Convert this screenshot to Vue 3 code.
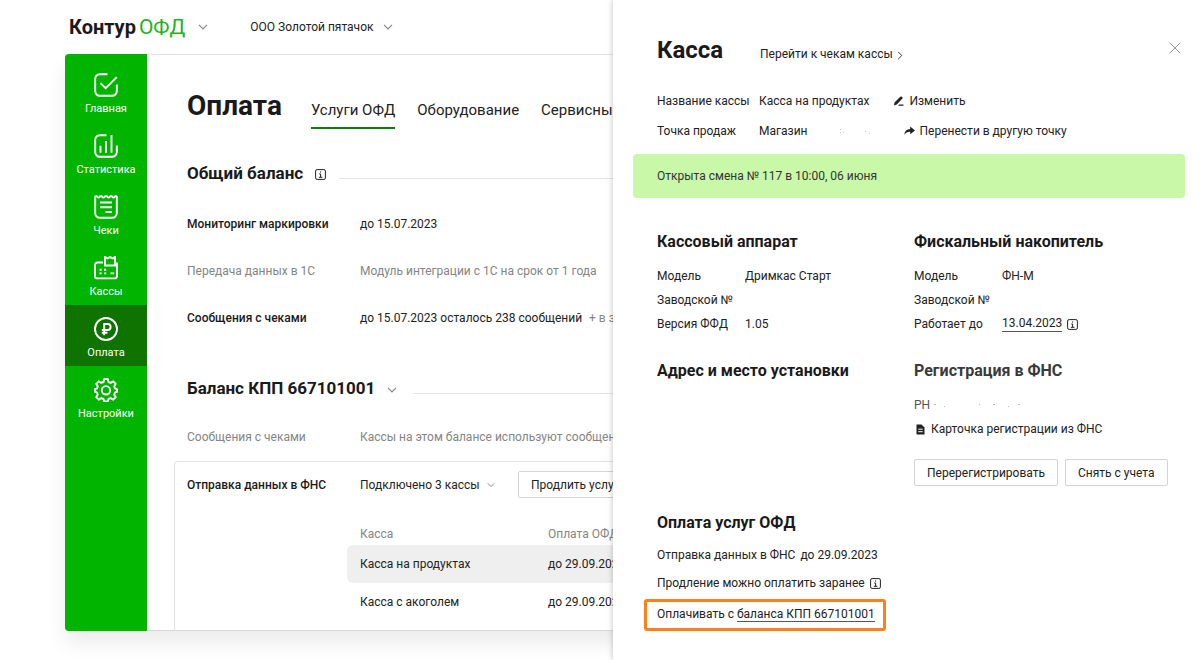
<script setup>
const menu = [
  { id: 'home', label: 'Главная' },
  { id: 'stats', label: 'Статистика' },
  { id: 'checks', label: 'Чеки' },
  { id: 'tills', label: 'Кассы' },
  { id: 'pay', label: 'Оплата', active: true },
  { id: 'settings', label: 'Настройки' },
]

const tabs = ['Услуги ОФД', 'Оборудование', 'Сервисные']

const tills = [
  { name: 'Касса на продуктах', paid: 'до 29.09.2023', selected: true },
  { name: 'Касса с акоголем', paid: 'до 29.09.2023' },
]
</script>

<template>
  <div class="page">
    <header class="top">
      <button class="logo" type="button">
        <span class="brand">Контур</span><span class="product">ОФД</span>
        <svg class="chev" viewBox="0 0 10 6"><path d="M1 .8 5 5 9 .8" /></svg>
      </button>
      <button class="org" type="button">
        ООО Золотой пятачок
        <svg class="chev" viewBox="0 0 10 6"><path d="M1 .8 5 5 9 .8" /></svg>
      </button>
    </header>

    <div class="window">
      <nav class="side">
        <a v-for="m in menu" :key="m.id" href="#" :class="['item', { active: m.active }]">
          <svg v-if="m.id === 'home'" viewBox="0 0 24 24">
            <path d="M13.5 1.2H6A4.6 4.6 0 0 0 1.2 6v12A4.6 4.6 0 0 0 6 22.8h12a4.6 4.6 0 0 0 4.8-4.8v-6.5" />
            <path d="m6.5 10.2 5.2 5L22.8 4.2" />
          </svg>
          <svg v-else-if="m.id === 'stats'" viewBox="0 0 24 24">
            <path d="M12.5 1.2H6A4.6 4.6 0 0 0 1.2 6v12A4.6 4.6 0 0 0 6 22.8h12a4.6 4.6 0 0 0 4.8-4.8v-6.5" />
            <path d="M6.5 18.8v-7M12 18.8V7M17.5 18.8V1" />
          </svg>
          <svg v-else-if="m.id === 'checks'" viewBox="0 0 24 24">
            <path d="M1.2 1v17A4.6 4.6 0 0 0 6 22.8h12a4.6 4.6 0 0 0 4.8-4.8V1" />
            <path d="M1.2 1.3h1.6q1.6 2.6 3.4 0h1.5q1.7 2.6 3.5 0h1.6q1.8 2.6 3.5 0h1.5q1.8 2.6 3.4 0h1.6" />
            <path d="M6 7.5h12M6 12.2h12M11.5 17H18" />
          </svg>
          <svg v-else-if="m.id === 'tills'" viewBox="0 0 24 24">
            <path d="M9 6.500H3.500A2.500 2.500 0 0 0 1 9v11.200A2.200 2.200 0 0 0 3.200 22.400h17.600a2.200 2.200 0 0 0 2.200-2.200V6.500" />
            <path d="M11 9.500V1l2.400 1.400L16 1l2.600 1.400L21 1v8.500z" />
            <path d="M5.500 13.700h2.200M10 13.700h2.200M5.500 17.400h2.200M10 17.400h2.200M16.500 17.400h3.700" />
          </svg>
          <svg v-else-if="m.id === 'pay'" viewBox="0 0 24 24">
            <circle cx="12" cy="12" r="11" />
            <path d="M10.200 18.200V7h3.400a3 3 0 0 1 0 6H7.800M7.800 15.700h5.700" />
          </svg>
          <svg v-else viewBox="0 0 24 24">
            <path
              stroke-linejoin="round"
              d="M10.200 1h3.600l.7 3 2.200.9 2.600-1.600 2.500 2.500-1.600 2.600.9 2.200 2 .5v2.800l-2 .5-.9 2.200 1.600 2.600-2.500 2.500-2.600-1.600-2.200.9-.7 2.500h-3.600l-.7-2.500-2.200-.9-2.600 1.600-2.500-2.500 1.600-2.600-.9-2.200-2-.5v-2.800l2-.5.9-2.200-1.600-2.600 2.500-2.500 2.600 1.600 2.200-.9z"
            />
            <circle cx="12" cy="12.300" r="4.200" />
          </svg>
          <span>{{ m.label }}</span>
        </a>
      </nav>

      <main class="content">
        <div class="title-row">
          <h1>Оплата</h1>
          <nav class="tabs">
            <a v-for="(t, i) in tabs" :key="t" href="#" :class="{ current: i === 0 }">{{ t }}</a>
          </nav>
        </div>

        <section class="balance">
          <div class="section-title">
            <h2>Общий баланс</h2>
            <svg class="info" viewBox="0 0 11 11"><rect x=".6" y=".6" width="9.800" height="9.800" rx="1.500" /><path d="M5.600 2.400v1.200M4.200 5h1.400v3.200M3.800 8.300h3.600" /></svg>
            <span class="line"></span>
          </div>
          <dl class="services">
            <dt>Мониторинг маркировки</dt>
            <dd>до 15.07.2023</dd>
            <dt class="off">Передача данных в 1С</dt>
            <dd class="off">Модуль интеграции с 1С на срок от 1 года</dd>
            <dt>Сообщения с чеками</dt>
            <dd>до 15.07.2023 осталось 238 сообщений <span class="reserve">+ в запасе</span></dd>
          </dl>
        </section>

        <section class="kpp">
          <div class="section-title">
            <h2>Баланс КПП 667101001</h2>
            <svg class="chev" viewBox="0 0 10 6"><path d="M1 .8 5 5 9 .8" /></svg>
            <span class="line"></span>
          </div>
          <dl class="services">
            <dt class="off">Сообщения с чеками</dt>
            <dd class="off">Кассы на этом балансе используют сообщения</dd>
          </dl>
          <div class="card">
            <div class="card-head">
              <h3>Отправка данных в ФНС</h3>
              <button class="drop" type="button">
                Подключено 3 кассы
                <svg class="chev small" viewBox="0 0 10 6"><path d="M1 .8 5 5 9 .8" /></svg>
              </button>
              <button class="btn" type="button">Продлить услуги</button>
            </div>
            <table>
              <thead>
                <tr><th>Касса</th><th>Оплата ОФД</th></tr>
              </thead>
              <tbody>
                <tr v-for="t in tills" :key="t.name" :class="{ selected: t.selected }">
                  <td>{{ t.name }}</td>
                  <td>{{ t.paid }}</td>
                </tr>
              </tbody>
            </table>
          </div>
        </section>
      </main>
    </div>

    <aside class="panel">
      <div class="panel-head">
        <h2>Касса</h2>
        <a href="#">Перейти к чекам кассы <svg class="next" viewBox="0 0 6 10"><path d="m1 1 4 4-4 4" /></svg></a>
        <button class="close" type="button" aria-label="Закрыть">
          <svg viewBox="0 0 12 12"><path d="m.8.800 10.400 10.400M11.200.800.800 11.200" /></svg>
        </button>
      </div>

      <dl class="about">
        <dt>Название кассы</dt>
        <dd>
          Касса на продуктах
          <button class="act edit" type="button">
            <svg viewBox="0 0 11 10"><path d="M1 9.500 1.500 6.600 7.300.8Q8 .1 8.900.800l.5.500q.6.700 0 1.300L3.800 8.600z" /><path d="M6 8.500h4.500v1.300H5z" /></svg>
            Изменить
          </button>
        </dd>
        <dt>Точка продаж</dt>
        <dd>
          Магазин
          <svg class="specks" viewBox="0 0 32 8"><path d="M1 2h1v1H1zM1 5h1v1H1zM4 5h1v1H4zM26 4h1v1h-1zM30 6h1v1h-1z" /></svg>
          <button class="act move" type="button">
            <svg viewBox="0 0 11 10"><path d="M.3 9Q.8 3.200 6.200 3.100V.6L11 4.400 6.200 8.200V5.800Q2.400 5.500.3 9z" /></svg>
            Перенести в другую точку
          </button>
        </dd>
      </dl>

      <p class="shift">Открыта смена № 117 в 10:00, 06 июня</p>

      <div class="cols">
        <section>
          <h3>Кассовый аппарат</h3>
          <dl>
            <dt>Модель</dt><dd>Дримкас Старт</dd>
            <dt>Заводской №</dt><dd></dd>
            <dt>Версия ФФД</dt><dd>1.05</dd>
          </dl>
        </section>
        <section>
          <h3>Фискальный накопитель</h3>
          <dl>
            <dt>Модель</dt><dd>ФН-М</dd>
            <dt>Заводской №</dt><dd></dd>
            <dt>Работает до</dt>
            <dd class="with-icon">
              <a class="under" href="#">13.04.2023</a>
              <svg class="info" viewBox="0 0 11 11"><rect x=".6" y=".6" width="9.800" height="9.800" rx="1.500" /><path d="M5.600 2.400v1.200M4.200 5h1.400v3.200M3.800 8.300h3.600" /></svg>
            </dd>
          </dl>
        </section>
        <section>
          <h3>Адрес и место установки</h3>
        </section>
        <section>
          <h3 class="soft">Регистрация в ФНС</h3>
          <p class="rn">РН <svg class="rn-specks" viewBox="0 0 96 8"><path d="M1 3h2v1H1zM11 5h1v1h-1zM46 3h1v1h-1zM60 3h2v1h-2zM75 5h1v1h-1zM85 3h2v1h-2z" /></svg></p>
          <a class="doc" href="#">
            <svg viewBox="0 0 9 11"><path d="M.5.500h5L8.500 3.500v7h-8z" /><path class="cut" d="M2.300 5.200h4.400M2.300 7.700h4.400" /></svg>
            Карточка регистрации из ФНС
          </a>
          <div class="buttons">
            <button class="btn" type="button">Перерегистрировать</button>
            <button class="btn" type="button">Снять с учета</button>
          </div>
        </section>
      </div>

      <section class="payment">
        <h3>Оплата услуг ОФД</h3>
        <p>Отправка данных в ФНС <span>до 29.09.2023</span></p>
        <p class="with-icon">
          Продление можно оплатить заранее
          <svg class="info" viewBox="0 0 11 11"><rect x=".6" y=".6" width="9.800" height="9.800" rx="1.500" /><path d="M5.600 2.400v1.200M4.200 5h1.400v3.200M3.800 8.300h3.600" /></svg>
        </p>
        <p class="marked">Оплачивать с <a class="under" href="#">баланса КПП 667101001</a></p>
      </section>
    </aside>
  </div>
</template>

<style>
body { margin: 0; background: #fff; }
</style>

<style scoped>
.page {
  position: relative;
  min-height: 100vh;
  overflow: hidden;
  font: 12px/24px Roboto, "Noto Sans", sans-serif;
  color: #222;
}
h1, h2, h3, p, dl, dd, dt { margin: 0; font-weight: 400; }
a { color: inherit; text-decoration: none; }
button { font: inherit; color: inherit; background: none; border: 0; padding: 0; }
svg { fill: none; stroke: currentColor; flex: none; }

.top { display: flex; align-items: center; height: 54px; padding-left: 69px; }
.logo { display: flex; align-items: baseline; line-height: 28px; }
.brand { font-size: 20px; font-weight: 700; color: #1a1a1a; }
.product { font-size: 21px; font-weight: 400; color: #1db51d; margin-left: 3px; }
.chev { width: 10px; height: 6px; color: #888; stroke-width: 1.2; }
.chev.small { width: 8px; }
.logo .chev { margin-left: 13px; align-self: center; }
.org { display: flex; align-items: center; gap: 10px; margin-left: 42px; }

.window {
  display: flex;
  margin-left: 65px;
  border-top: 1px solid #e4e4e4;
  border-bottom: 1px solid #d8d8d8;
  border-radius: 4px 0 0 4px;
  box-shadow: 0 12px 20px rgba(0, 0, 0, 0.08);
}
.side {
  flex: none;
  width: 82px;
  margin: -1px 0;
  padding-top: 7px;
  box-sizing: border-box;
  background: #00b400;
  border-radius: 4px 0 0 4px;
  color: #fff;
}
.item {
  display: flex;
  flex-direction: column;
  align-items: center;
  height: 61px;
  box-sizing: border-box;
  padding-top: 12px;
  font-size: 11px;
  line-height: 14px;
}
.item.active { background: #0f7300; }
.item svg { width: 24px; height: 24px; stroke-width: 1.9; margin-bottom: 5px; }

.content { flex: 1; min-width: 0; padding: 33px 0 0 27px; overflow: hidden; }
.title-row { display: flex; align-items: baseline; padding-left: 13px; gap: 29px; white-space: nowrap; }
h1 { font-size: 28px; line-height: 36px; font-weight: 700; color: #1a1a1a; }
.tabs { display: flex; gap: 22px; font-size: 15px; line-height: 24px; }
.tabs a { padding-bottom: 5px; }
.tabs .current { border-bottom: 2px solid #0f7d0f; }

.section-title { display: flex; align-items: center; padding-left: 13px; }
.section-title h2 { font-size: 17px; font-weight: 700; color: #1a1a1a; }
.section-title .line { flex: 1; height: 1px; background: #e4e4e4; margin: 10px 0 0 13px; }
.info { width: 11px; height: 11px; stroke-width: 1; }
.section-title .info { margin: 3px 0 0 12px; }
.section-title .chev { margin: 3px 3px 0 12px; }
.balance { margin-top: 32px; }
.services {
  display: grid;
  grid-template-columns: 173px 1fr;
  row-gap: 24px;
  padding: 28px 0 0 13px;
  line-height: 23px;
  white-space: nowrap;
}
.services dt { font-weight: 500; color: #1a1a1a; }
.services .off { font-weight: 400; color: #858585; }
.reserve { color: #858585; margin-left: 4px; }
.kpp { margin-top: 46px; }
.kpp .services { padding-top: 26px; }

.card {
  margin-top: 12px;
  border: 1px solid #e2e2e2;
  border-width: 1px 0 0 1px;
  border-radius: 4px 0 0 0;
  padding: 9px 0 9px 12px;
}
.card-head { display: grid; grid-template-columns: 173px 158px auto 1fr; align-items: center; white-space: nowrap; }
.card-head h3 { font-size: 12px; font-weight: 500; color: #1a1a1a; }
.drop { display: flex; align-items: center; gap: 7px; }
.btn { height: 27px; padding: 0 12px; border: 1px solid #d4d4d4; border-radius: 2px; line-height: 24px; white-space: nowrap; }
table { width: calc(100% - 160px); margin: 25px 0 0 160px; border-collapse: separate; border-spacing: 0; table-layout: fixed; white-space: nowrap; }
th, td { padding: 0 0 0 13px; text-align: left; height: 38px; box-sizing: border-box; }
th { height: 22px; line-height: 22px; font-weight: 400; color: #858585; }
th:first-child { width: 188px; box-sizing: border-box; }
.selected td { background: #efefef; }
.selected td:first-child { border-radius: 6px 0 0 6px; }

.panel {
  position: absolute;
  top: 0;
  right: 0;
  bottom: 0;
  width: 587px;
  box-sizing: border-box;
  padding: 32px 15px 0 20px;
  background: #fff;
  box-shadow: 0 0 6px rgba(0, 0, 0, 0.25);
}
.panel-head { display: flex; align-items: baseline; padding-left: 24px; line-height: 36px; }
.panel-head h2 { width: 103px; font-size: 24px; font-weight: 700; color: #1a1a1a; }
.next { width: 6px; height: 9px; margin-left: 1px; vertical-align: -2px; }
.close { margin: 0 4px 0 auto; align-self: flex-start; line-height: 0; padding-top: 10px; color: #999; }
.close svg { width: 12px; height: 12px; }
.about { display: grid; grid-template-columns: 102px 1fr; row-gap: 6px; padding: 17px 0 11px 24px; }
.about dd { display: flex; align-items: center; }
.act { display: flex; align-items: center; gap: 5px; }
.act svg { width: 11px; height: 10px; fill: #222; stroke: none; }
.edit { margin-left: 24px; }
.move { margin-left: 33px; }
.specks { width: 32px; height: 8px; margin-left: 31px; fill: #ccc; stroke: none; }
.shift { padding: 10px 24px; background: #c8f8a8; border-radius: 4px; color: #333; }
.cols { display: grid; grid-template-columns: 257px 1fr; row-gap: 23px; padding: 32px 0 0 24px; }
.panel h3 { font-size: 16px; font-weight: 700; color: #1a1a1a; }
.panel h3.soft { color: #3a3a3a; }
.cols dl { display: grid; grid-template-columns: 88px 1fr; padding-top: 10px; grid-auto-rows: 24px; }
.with-icon { display: flex; align-items: center; gap: 5px; }
.under { line-height: 15px; border-bottom: 1px solid #555; }
.rn { padding-top: 11px; line-height: 23px; color: #555; }
.rn-specks { width: 96px; height: 8px; fill: #bbb; stroke: none; }
.doc { display: flex; align-items: center; gap: 6px; }
.doc svg { width: 9px; height: 11px; margin-left: 2px; fill: #222; stroke: none; }
.doc .cut { stroke: #fff; }
.buttons { display: flex; gap: 7px; padding-top: 18px; }
.payment { padding: 25px 0 0 24px; }
.payment p { margin-top: 4px; }
.payment h3 + p { margin-top: 8px; }
.payment span { margin-left: 2px; }
.payment .marked {
  width: max-content;
  margin-left: -13px;
  padding: 0 8px 2px 10px;
  border: 3px solid #ff7f1a;
  border-radius: 3px;
}
</style>
